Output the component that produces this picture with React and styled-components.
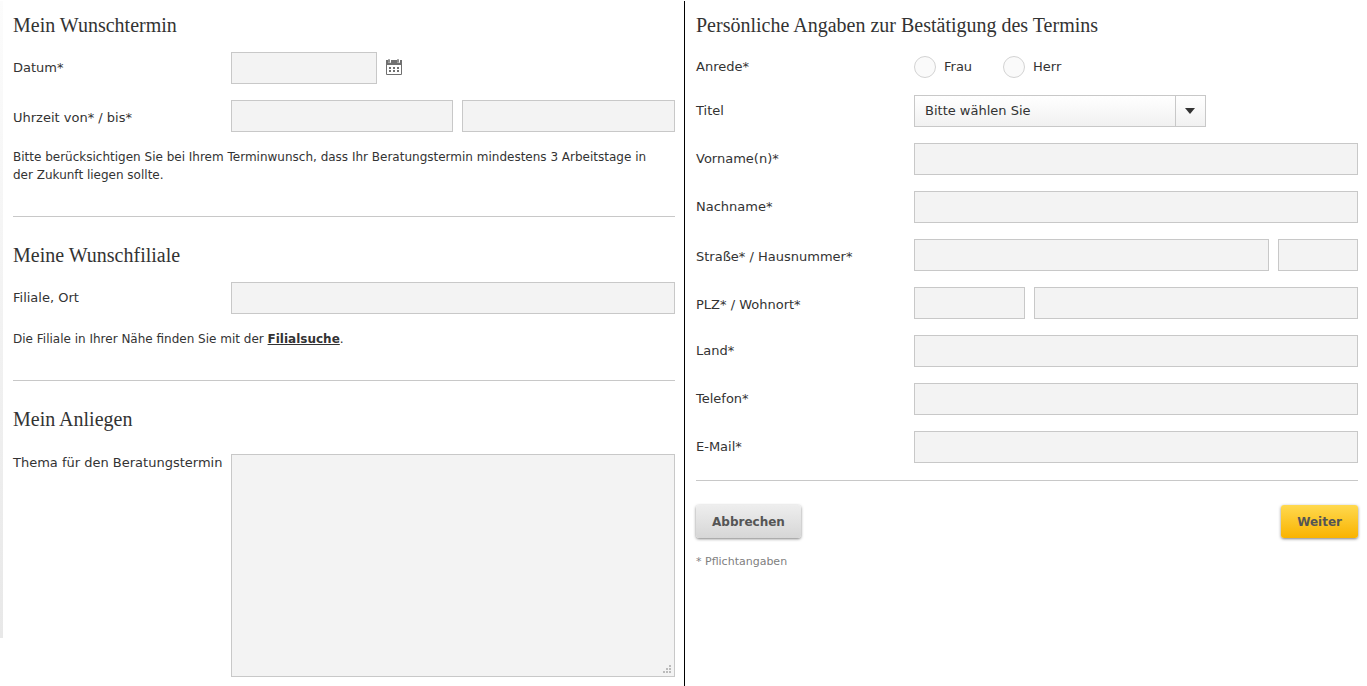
import React from "react";
import styled, { createGlobalStyle } from "styled-components";

const textColor = "#333";
const lineColor = "#c8c8c8";
const fieldColor = "#f3f3f3";

const GlobalStyle = createGlobalStyle`
  * {
    box-sizing: border-box;
  }
  body {
    margin: 0;
    background: #fff;
    color: ${textColor};
    font: 13px/18px Verdana, "DejaVu Sans", sans-serif;
  }
  input, select, textarea, button {
    font: inherit;
    color: inherit;
    margin: 0;
  }
`;

const Form = styled.form`
  display: flex;
  min-height: 100vh;
  padding-top: 1px;
`;

const Column = styled.div`
  flex: 1 1 0;
  min-width: 0;
  padding: 12px 9px 9px 11px;
`;

const LeftColumn = styled(Column)`
  padding-left: 13px;
  border-right: 1px solid #000;
  background: linear-gradient(#fcfcfc, #e8e8e8) 0 0 / 3px calc(100% - 48px)
    no-repeat;
`;

const Section = styled.section`
  & + & {
    margin-top: 32px;
    padding-top: 26px;
    border-top: 1px solid ${lineColor};
  }
`;

const Title = styled.h2`
  margin: 0 0 15px;
  font: 20px/24px Georgia, "Liberation Serif", serif;
`;

const Row = styled.div`
  display: flex;
  align-items: ${props => (props.$top ? "flex-start" : "center")};
  min-height: 32px;
  margin-bottom: 16px;
  ${props => props.$top && "margin: 23px 0 0;"}
`;

const RadioRow = styled(Row)`
  min-height: 30px;
  margin-bottom: 13px;
`;

const LabelCell = styled.div`
  flex: 0 0 218px;
  padding-top: ${props => (props.$paired ? "4px" : "0")};
`;

const Fields = styled.div`
  display: flex;
  flex: 1;
  align-items: center;
  gap: 9px;
  min-width: 0;
`;

const Input = styled.input`
  flex: ${props => (props.$width ? `0 0 ${props.$width}` : "1 1 0")};
  min-width: 0;
  height: 32px;
  padding: 0 10px;
  border: 1px solid ${lineColor};
  border-radius: 0;
  background: ${fieldColor};
`;

const TextArea = styled.textarea`
  flex: 1;
  min-width: 0;
  height: 223px;
  padding: 10px;
  border: 1px solid ${lineColor};
  background: ${fieldColor};
  resize: vertical;

  &::-webkit-resizer {
    background: url("data:image/svg+xml,%3Csvg xmlns='http://www.w3.org/2000/svg' width='8' height='8' fill='%23bbb'%3E%3Cpath d='M6 0h2v2h-2zM3 3h2v2h-2zM6 3h2v2h-2zM0 6h2v2h-2zM3 6h2v2h-2zM6 6h2v2h-2z'/%3E%3C/svg%3E")
      center no-repeat;
  }
`;

const IconButton = styled.button`
  display: flex;
  padding: 0 0 2px;
  border: 0;
  background: none;
  cursor: pointer;
`;

const Note = styled.p`
  margin: 0;
  font-size: 12px;
`;

const BranchLink = styled.a`
  color: inherit;
  font-weight: bold;
`;

const RadioLabel = styled.label`
  display: flex;
  align-items: center;
  gap: 8px;
  width: 80px;
`;

const Radio = styled.input`
  appearance: none;
  width: 22px;
  height: 22px;
  border: 1px solid #d3d3d3;
  border-radius: 50%;
  background: #fafafa;

  &:checked {
    background: radial-gradient(${textColor} 0 5px, #fafafa 6px);
  }
`;

const SelectBox = styled.div`
  position: relative;
  width: 292px;
`;

const Select = styled.select`
  display: block;
  appearance: none;
  width: 100%;
  height: 32px;
  padding: 0 40px 0 10px;
  border: 1px solid ${lineColor};
  border-radius: 0;
  background: linear-gradient(#fff, #f1f1f1);
`;

const SelectArrow = styled.span`
  position: absolute;
  top: 1px;
  right: 1px;
  bottom: 1px;
  display: flex;
  align-items: center;
  justify-content: center;
  width: 30px;
  padding-right: 2px;
  border-left: 1px solid ${lineColor};
  pointer-events: none;
`;

const Actions = styled.div`
  display: flex;
  justify-content: space-between;
  margin-top: 17px;
  padding: 24px 0 15px;
  border-top: 1px solid ${lineColor};
`;

const Button = styled.button`
  height: 33px;
  padding: 0 16px;
  border: 0;
  border-radius: 3px;
  background: ${props =>
    props.$primary
      ? "linear-gradient(#ffd94f, #f9b300)"
      : "linear-gradient(#eee, #d6d6d6)"};
  box-shadow: 0 1px 3px rgba(0, 0, 0, 0.5);
  color: #555;
  font-size: 12px;
  font-weight: bold;
  cursor: pointer;
`;

const Footnote = styled.p`
  margin: 0;
  color: #808080;
  font-size: 11px;
`;

const CalendarIcon = () => (
  <svg width="16" height="16" viewBox="0 0 16 16" aria-hidden="true">
    <path
      fill="#707070"
      fillRule="evenodd"
      d="M0 1h16v14q0 1-1 1H1q-1 0-1-1zM1 6v9h14V6z"
    />
    <path
      fill="#707070"
      d="M3 8h2v2H3zM7 8h2v2H7zM11 8h2v2h-2zM3 11h2v2H3zM7 11h2v2H7zM11 11h2v2h-2z"
    />
    <rect x="2" y="0" width="3" height="4" rx="1" fill="#fff" />
    <rect x="11" y="0" width="3" height="4" rx="1" fill="#fff" />
    <rect x="2" y="0" width="2" height="4" rx="1" fill="#8c8c8c" />
    <rect x="11" y="0" width="2" height="4" rx="1" fill="#8c8c8c" />
  </svg>
);

const TextRow = ({ id, label, type = "text" }) => (
  <Row>
    <LabelCell>
      <label htmlFor={id}>{label}</label>
    </LabelCell>
    <Fields>
      <Input id={id} name={id} type={type} />
    </Fields>
  </Row>
);

// Two inputs that share one line, each with its own half of the label
const PairRow = ({ first, second }) => (
  <Row>
    <LabelCell $paired>
      <label htmlFor={first.id}>{first.label}</label>
      {" / "}
      <label htmlFor={second.id}>{second.label}</label>
    </LabelCell>
    <Fields>
      <Input id={first.id} name={first.id} $width={first.width} />
      <Input id={second.id} name={second.id} $width={second.width} />
    </Fields>
  </Row>
);

const AppointmentColumn = () => (
  <LeftColumn>
    <Section>
      <Title>Mein Wunschtermin</Title>
      <Row>
        <LabelCell>
          <label htmlFor="datum">Datum*</label>
        </LabelCell>
        <Fields>
          <Input id="datum" name="datum" $width="146px" />
          <IconButton type="button" aria-label="Kalender öffnen">
            <CalendarIcon />
          </IconButton>
        </Fields>
      </Row>
      <PairRow
        first={{ id: "von", label: "Uhrzeit von*", width: "50%" }}
        second={{ id: "bis", label: "bis*" }}
      />
      <Note>
        Bitte berücksichtigen Sie bei Ihrem Terminwunsch, dass Ihr
        Beratungstermin mindestens 3 Arbeitstage in
        <br />
        der Zukunft liegen sollte.
      </Note>
    </Section>
    <Section>
      <Title>Meine Wunschfiliale</Title>
      <TextRow id="filiale" label="Filiale, Ort" />
      <Note>
        Die Filiale in Ihrer Nähe finden Sie mit der{" "}
        <BranchLink href="#filialsuche">Filialsuche</BranchLink>.
      </Note>
    </Section>
    <Section>
      <Title>Mein Anliegen</Title>
      <Row $top>
        <LabelCell>
          <label htmlFor="thema">Thema für den Beratungstermin</label>
        </LabelCell>
        <TextArea id="thema" name="thema" />
      </Row>
    </Section>
  </LeftColumn>
);

const PersonColumn = () => (
  <Column>
    <Title>Persönliche Angaben zur Bestätigung des Termins</Title>
    <RadioRow role="radiogroup" aria-labelledby="anrede">
      <LabelCell id="anrede">Anrede*</LabelCell>
      <Fields>
        <RadioLabel>
          <Radio type="radio" name="anrede" value="frau" />
          Frau
        </RadioLabel>
        <RadioLabel>
          <Radio type="radio" name="anrede" value="herr" />
          Herr
        </RadioLabel>
      </Fields>
    </RadioRow>
    <Row>
      <LabelCell>
        <label htmlFor="titel">Titel</label>
      </LabelCell>
      <SelectBox>
        <Select id="titel" name="titel">
          <option>Bitte wählen Sie</option>
          <option>Dr.</option>
          <option>Prof.</option>
        </Select>
        <SelectArrow>
          <svg width="10" height="6" viewBox="0 0 10 6" aria-hidden="true">
            <path d="M0 0h10L5 6z" fill={textColor} />
          </svg>
        </SelectArrow>
      </SelectBox>
    </Row>
    <TextRow id="vorname" label="Vorname(n)*" />
    <TextRow id="nachname" label="Nachname*" />
    <PairRow
      first={{ id: "strasse", label: "Straße*" }}
      second={{ id: "hausnummer", label: "Hausnummer*", width: "80px" }}
    />
    <PairRow
      first={{ id: "plz", label: "PLZ*", width: "25%" }}
      second={{ id: "wohnort", label: "Wohnort*" }}
    />
    <TextRow id="land" label="Land*" />
    <TextRow id="telefon" label="Telefon*" type="tel" />
    <TextRow id="email" label="E-Mail*" type="email" />
    <Actions>
      <Button type="button">Abbrechen</Button>
      <Button type="submit" $primary>
        Weiter
      </Button>
    </Actions>
    <Footnote>* Pflichtangaben</Footnote>
  </Column>
);

export default function App() {
  return (
    <>
      <GlobalStyle />
      <Form onSubmit={event => event.preventDefault()}>
        <AppointmentColumn />
        <PersonColumn />
      </Form>
    </>
  );
}
